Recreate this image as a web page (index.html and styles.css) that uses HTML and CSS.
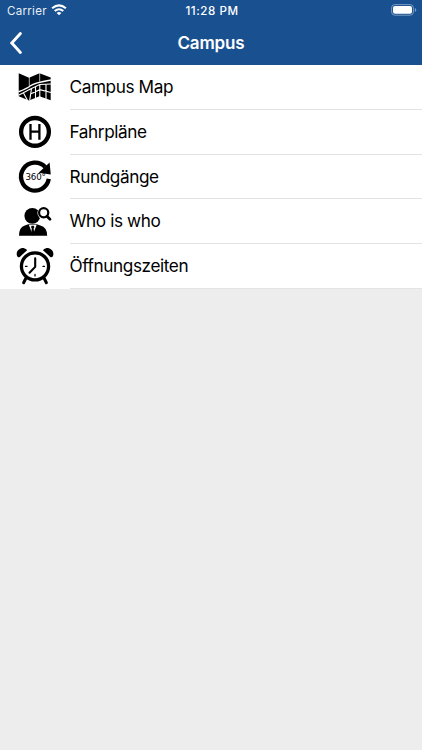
FILE: index.html
```
<!DOCTYPE html>
<html lang="de">
<head>
<meta charset="utf-8">
<title>Campus</title>
<link rel="stylesheet" href="styles.css">
</head>
<body>
<header class="header">
  <div class="status">
    <div class="carrier"><span class="carrier-name">Carrier</span>
      <svg class="wifi" width="16" height="12" viewBox="0 0 16 12" fill="none" stroke="#fff" stroke-width="2"><path d="M1.1 4.3Q8-1.6 14.9 4.3M3.7 7.1Q8 3.3 12.3 7.1"/><path d="M8 11.2 5.6 8.9Q8 6.9 10.4 8.9Z" fill="#fff" stroke="none"/></svg>
    </div>
    <time class="clock">11:28 PM</time>
    <svg class="battery" width="26" height="12" viewBox="0 0 26 12"><rect x=".6" y=".6" width="21.8" height="10.6" rx="3.2" fill="none" stroke="#7a9bc3"/><rect x="2" y="2" width="19" height="7.8" rx="2" fill="#fff"/><path d="M23.8 4v4q1.5-.7 1.5-2t-1.5-2" fill="#7a9bc3"/></svg>
  </div>
  <nav class="nav">
    <svg class="back" width="16" height="24" viewBox="0 0 16 24"><path d="M13.4 2.6 4.8 12l8.6 9.4" fill="none" stroke="#fff" stroke-width="2.9" stroke-linecap="round"/></svg>
    <h1 class="title">Campus</h1>
  </nav>
</header>
<main class="list">
  <div class="row">
    <svg class="icon" viewBox="0 -1 50 44.75"><path d="M8.7 7.3 19 11.8 29.5 7.3 40.7 11.5V34.3L29.5 30.2 19 34.5 8.7 30.2Z"/><g fill="none" stroke="#fff"><path d="M19.3 11v9M29.7 7v8.5" stroke-width=".7"/><path d="M8.5 25.8Q17 22.5 20.5 19.7T41 14" stroke-width="1.4"/><path d="M8.5 29.3 20 23.2 29.8 18.5 41 18M13.5 27l4 7.5M21.5 22.5l-1.8 12M25.5 21v12M29.8 18.5v12.5M36 18v16M20.5 28l9.3-4.3L41 26.5" stroke-width="1.1"/></g></svg>
    <span class="label">Campus Map</span>
  </div>
  <div class="row">
    <svg class="icon" viewBox="0 -.2 50 44.75"><circle cx="25" cy="21.7" r="13.9" fill="none" stroke="#000" stroke-width="4.3"/><path d="M20.5 13.7v16M29.4 13.7v16M20.5 21.4h8.9" fill="none" stroke="#000" stroke-width="2.3"/></svg>
    <span class="label">Fahrpläne</span>
  </div>
  <div class="row">
    <svg class="icon" viewBox="0 .5 50 44.75"><path d="M35.2 12.6A14 14 0 1 0 38.8 24.5" fill="none" stroke="#000" stroke-width="4.3"/><path d="m39.6 8.1 1.2 11.9-12.2-1.8Z"/><text class="degrees" x="25.6" y="25.8" text-anchor="middle">360°</text></svg>
    <span class="label">Rundgänge</span>
  </div>
  <div class="row">
    <svg class="icon" viewBox="0 .3 50 44.75"><circle cx="22.3" cy="17.2" r="7.9"/><path d="M9 37q0-8.3 5.8-10.1l3.5-1.4h8.6l3.5 1.4Q37 28.5 37.2 37Z"/><path d="m18.8 26.2 3.9 10.1 4-10.1Z" fill="#fff"/><path d="m21.6 27-.6 1.6.8 1.3-.7 4.4 1.6 2.7 1.6-2.7-.7-4.4.8-1.3-.6-1.6Z"/><circle cx="33.7" cy="14.1" r="6.3" fill="#fff"/><circle cx="33.7" cy="14.1" r="4.6" fill="#fff" stroke="#000" stroke-width="2.2"/><path d="m37 17.5 3 3" fill="none" stroke="#000" stroke-width="2.8" stroke-linecap="round"/></svg>
    <span class="label">Who is who</span>
  </div>
  <div class="row">
    <svg class="icon" viewBox="0 1 50 44.75"><path d="M7.3 13.5C5 9 9.5 4.5 14 5.2q2.3.3 3.1 2L9.8 13.9q-1.5.7-2.5-.4M42.8 13.5C45.1 9 40.6 4.5 36.1 5.2q-2.3.3-3.1 2l7.3 6.7q1.5.7 2.5-.4"/><g fill="none" stroke="#000" stroke-linecap="round"><circle cx="25" cy="23.4" r="13.6" stroke-width="3.3"/><path d="m15.6 35.8-2 4M34.4 35.8l2 4" stroke-width="3"/><path d="M25.2 15.2v8.7l-5.7 5.9" stroke-width="2.1" stroke-linejoin="round"/><path d="M15.5 23.5H17M33 23.5h1.5M25 31.5V33" stroke-width="1.3"/></g></svg>
    <span class="label">Öffnungszeiten</span>
  </div>
</main>
</body>
</html>
```

FILE: styles.css
```
* { box-sizing: border-box; }
body { margin: 0; min-height: 750px; background: #ededed; font-family: Inter, "Liberation Sans", sans-serif; color: #000; }
.header { height: 65.4px; background: #19508f; color: #fff; }
.status { height: 21px; display: grid; grid-template-columns: 1fr auto 1fr; align-items: center; padding: 1px 5px 0 7px; font-size: 11.6px; }
.carrier { display: flex; align-items: center; gap: 4px; letter-spacing: .25px; }
.carrier-name { opacity: .9; }
.wifi { margin-top: -2px; }
.clock { font-weight: 500; letter-spacing: .55px; }
.battery { justify-self: end; margin-top: -2px; }
.nav { height: 43px; display: grid; grid-template-columns: 1fr auto 1fr; align-items: center; padding: 0 7px; }
.title { margin: 1px 0 0; font-size: 17px; font-weight: 600; line-height: 24px; letter-spacing: -.15px; }
.list { background: #fff; }
.row { height: 44.7px; display: flex; align-items: center; padding-left: 10px; }
.icon { width: 50px; height: 44.7px; flex: none; }
.label { flex: 1; height: 44.7px; margin-left: 9.5px; line-height: 44.2px; font-size: 17.2px; letter-spacing: -.4px; border-bottom: 1px solid #e3e3e4; white-space: nowrap; }
.degrees { font: 8.7px "DejaVu Sans", sans-serif; letter-spacing: -.2px; }
```
